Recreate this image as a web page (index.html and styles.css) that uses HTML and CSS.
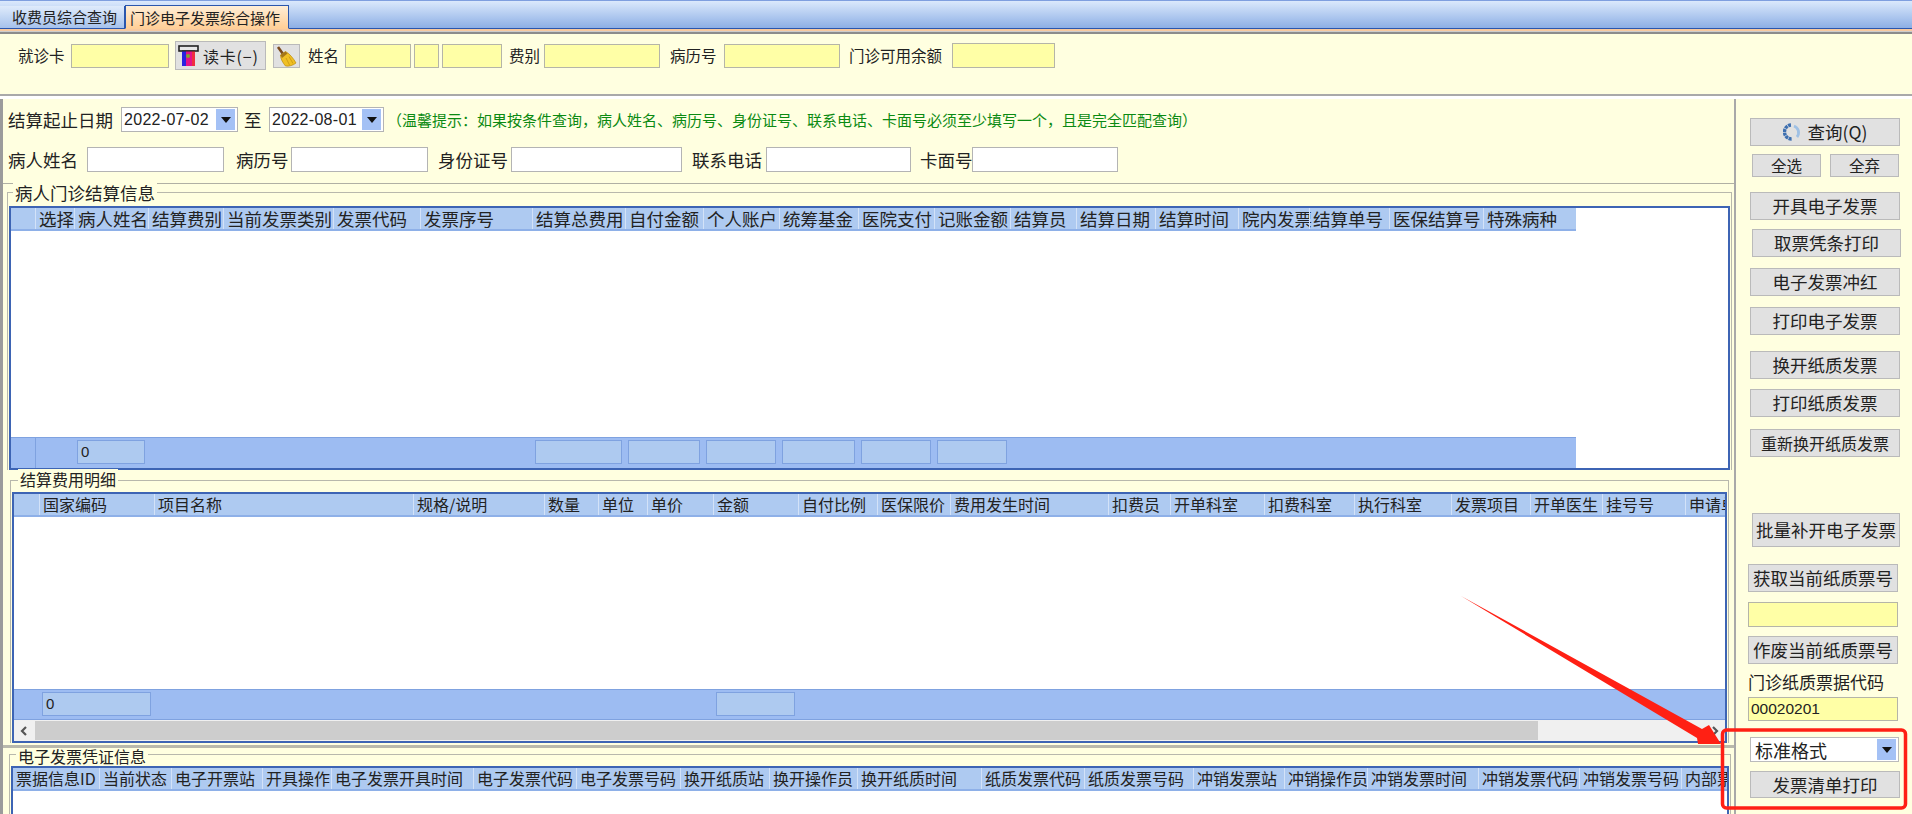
FILE: index.html
```html
<!DOCTYPE html>
<html lang="zh">
<head>
<meta charset="utf-8">
<title>门诊电子发票综合操作</title>
<link rel="stylesheet" href="styles.css">
</head>
<body>
<div class="app">
  <div class="tabbar">
    <div class="tab">收费员综合查询</div>
    <div class="tab active">门诊电子发票综合操作</div>
  </div>
  <div class="tabline"></div>

  <div class="patient-row">
    <label>就诊卡</label>
    <input class="yellow" type="text">
    <button class="btn read-card" type="button">
      <svg width="21" height="21" viewBox="0 0 21 21"><rect x="1" y="1" width="19" height="5" fill="#e8e8e8" stroke="#222" stroke-width="1.6"/><rect x="4" y="6" width="13" height="15" fill="#e2128a"/><rect x="4" y="6" width="4" height="15" fill="#2a22e0"/><rect x="14" y="6" width="3" height="15" fill="#ef2f3f"/><circle cx="10" cy="11" r="2" fill="#7fa830"/><path d="M4 6h13" stroke="#222"/></svg>
      <span>读卡(−)</span>
    </button>
    <button class="btn broom" type="button">
      <svg width="21" height="21" viewBox="0 0 21 21"><path d="M2 1l5 7" stroke="#7a4a1c" stroke-width="2.6" fill="none"/><path d="M4.500 9l5-3.500c4 2 8 7 10.500 11.500-3 2.500-7 3.500-10.500 3C7 17 4.500 13 4.500 9z" fill="#f0c024" stroke="#b98a10" stroke-width=".7"/><path d="M4.500 9l5-3.500 2 2-5.500 4.500z" fill="#a5761a"/><path d="M10 12l3.500 7M13 10.500l4 7" stroke="#c79512" stroke-width=".8"/></svg>
    </button>
    <label>姓名</label>
    <input class="yellow" type="text">
    <input class="yellow" type="text">
    <input class="yellow" type="text">
    <label>费别</label>
    <input class="yellow" type="text">
    <label>病历号</label>
    <input class="yellow" type="text">
    <label>门诊可用余额</label>
    <input class="yellow" type="text">
  </div>
  <div class="white-band"></div>

  <div class="workspace">
    <div class="main">
      <div class="filter">
        <div class="filter-dates">
          <label>结算起止日期</label>
          <div class="date"><span>2022-07-02</span><i class="drop"></i></div>
          <label>至</label>
          <div class="date"><span>2022-08-01</span><i class="drop"></i></div>
          <p class="hint">&#xFF08;温馨提示&#xFF1A;如果按条件查询&#xFF0C;病人姓名、病历号、身份证号、联系电话、卡面号必须至少填写一个&#xFF0C;且是完全匹配查询&#xFF09;</p>
        </div>
        <div class="filter-fields">
          <label>病人姓名</label>
          <input class="plain" type="text">
          <label>病历号</label>
          <input class="plain" type="text">
          <label>身份证号</label>
          <input class="plain" type="text">
          <label>联系电话</label>
          <input class="plain" type="text">
          <label>卡面号</label>
          <input class="plain" type="text">
        </div>
      </div>

      <section class="group group-settle">
        <div class="legend">病人门诊结算信息</div>
        <div class="grid grid-settle">
          <div class="row head">
            <span></span><span>选择</span><span>病人姓名</span><span>结算费别</span><span>当前发票类别</span><span>发票代码</span><span>发票序号</span><span>结算总费用</span><span>自付金额</span><span>个人账户</span><span>统筹基金</span><span>医院支付</span><span>记账金额</span><span>结算员</span><span>结算日期</span><span>结算时间</span><span>院内发票</span><span>结算单号</span><span>医保结算号</span><span>特殊病种</span>
          </div>
          <div class="grid-body"></div>
          <div class="row sum">
            <span></span><span></span><span class="box">0</span><span></span><span></span><span></span><span></span><span class="box"></span><span class="box"></span><span class="box"></span><span class="box"></span><span class="box"></span><span class="box"></span><span></span><span></span><span></span><span></span><span></span><span></span><span></span>
          </div>
        </div>
      </section>

      <section class="group group-fee">
        <div class="legend">结算费用明细</div>
        <div class="grid grid-fee">
          <div class="row head">
            <span></span><span>国家编码</span><span>项目名称</span><span>规格/说明</span><span>数量</span><span>单位</span><span>单价</span><span>金额</span><span>自付比例</span><span>医保限价</span><span>费用发生时间</span><span>扣费员</span><span>开单科室</span><span>扣费科室</span><span>执行科室</span><span>发票项目</span><span>开单医生</span><span>挂号号</span><span class="cut">申请单号</span>
          </div>
          <div class="grid-body"></div>
          <div class="row sum">
            <span></span><span class="box">0</span><span></span><span></span><span></span><span></span><span></span><span class="box"></span><span></span><span></span><span></span><span></span><span></span><span></span><span></span><span></span><span></span><span></span><span></span>
          </div>
          <div class="scrollbar">
            <svg class="chev" width="21" height="20" viewBox="0 0 21 20"><path d="M12 6l-4 4 4 4" fill="none" stroke="#555" stroke-width="2.2"/></svg>
            <div class="thumb"></div>
            <svg class="chev" width="21" height="20" viewBox="0 0 21 20"><path d="M9 6l4 4-4 4" fill="none" stroke="#555" stroke-width="2.2"/></svg>
          </div>
        </div>
      </section>

      <div class="splitter"></div>

      <section class="group group-voucher">
        <div class="legend">电子发票凭证信息</div>
        <div class="grid grid-voucher">
          <div class="row head">
            <span>票据信息ID</span><span>当前状态</span><span>电子开票站</span><span>开具操作</span><span>电子发票开具时间</span><span>电子发票代码</span><span>电子发票号码</span><span>换开纸质站</span><span>换开操作员</span><span>换开纸质时间</span><span>纸质发票代码</span><span>纸质发票号码</span><span>冲销发票站</span><span>冲销操作员</span><span>冲销发票时间</span><span>冲销发票代码</span><span>冲销发票号码</span><span class="cut">内部票据号</span>
          </div>
          <div class="grid-body"></div>
        </div>
      </section>
    </div>

    <aside class="side">
      <button class="btn act query" type="button">
        <svg width="18" height="18" viewBox="0 0 18 18"><path d="M8 2a7 7 0 1 0 1 14" fill="none" stroke="#3d6fb0" stroke-width="3.400" stroke-dasharray="3 .7"/><path d="M11 3a7 7 0 0 1 3 11" fill="none" stroke="#9fc0e4" stroke-width="2.800"/></svg>
        <span>查询(Q)</span>
      </button>
      <div class="pair">
        <button class="btn small" type="button">全选</button>
        <button class="btn small" type="button">全弃</button>
      </div>
      <button class="btn act issue" type="button">开具电子发票</button>
      <button class="btn act receipt" type="button">取票凭条打印</button>
      <button class="btn act gap11" type="button">电子发票冲红</button>
      <button class="btn act gap11" type="button">打印电子发票</button>
      <button class="btn act swap" type="button">换开纸质发票</button>
      <button class="btn act print-paper" type="button">打印纸质发票</button>
      <button class="btn act reswap" type="button">重新换开纸质发票</button>
      <button class="btn act batch" type="button">批量补开电子发票</button>
      <button class="btn act fetch" type="button">获取当前纸质票号</button>
      <input class="yellow side-no" type="text">
      <button class="btn act void" type="button">作废当前纸质票号</button>
      <div class="side-label">门诊纸质票据代码</div>
      <input class="yellow side-code" type="text" value="00020201">
      <div class="format"><span>标准格式</span><i class="drop"></i></div>
      <button class="btn act list-print" type="button">发票清单打印</button>
    </aside>
  </div>

  <svg class="annotation" width="1912" height="814" viewBox="0 0 1912 814">
    <polygon points="1461,596 1702,729 1709,725 1721,744 1698,744 1697,738" fill="#ff2014"/>
    <rect x="1722.5" y="730" width="183" height="78" rx="4" fill="none" stroke="#ff2014" stroke-width="3.500"/>
  </svg>
</div>
</body>
</html>
```

FILE: styles.css
```css
* { box-sizing: border-box; }

html, body { margin: 0; padding: 0; }

body {
  font-family: "Noto Sans CJK SC", "Liberation Sans", sans-serif;
  font-size: 16px;
  color: #222;
  background: #ffffe0;
}

.app {
  position: relative;
  width: 1912px;
  height: 814px;
  overflow: hidden;
  display: flex;
  flex-direction: column;
}

input, button { font: inherit; color: inherit; margin: 0; }

label { white-space: nowrap; flex: none; }

/* tabs */
.tabbar {
  height: 29px;
  display: flex;
  align-items: flex-end;
  border-top: 1px solid #7f9fdf;
  border-bottom: 1px solid #2a56ad;
  background: linear-gradient(#dbe9fc, #8dafe5);
  font-size: 15px;
}
.tab {
  height: 22px;
  line-height: 21px;
  width: 125px;
  padding-left: 12px;
  border-right: 1px solid #2a56ad;
  background: linear-gradient(#dfebfb, #a6c2ec);
}
.active {
  height: 24px;
  line-height: 23px;
  width: 164px;
  padding-left: 4px;
  margin-bottom: -1px;
  background: linear-gradient(#ffeed6, #ffcf98);
  border: 1px solid #2a56ad;
  border-bottom-color: #ffcf98;
}
.tabline {
  height: 5px;
  flex: none;
  border-top: 2px solid #f7c9a0;
  border-bottom: 2px solid #8c8c8c;
  background: #ccc;
}

/* inputs */
.yellow, .plain {
  display: block;
  padding: 0 2px;
  border: 1px solid #b5b5a8;
  outline: 0;
  background: #ffffa6;
  border-radius: 0;
}
.plain { background: #fff; height: 25px; border-color: #b4b4b4; }

.btn {
  display: block;
  padding: 0;
  border: 1px solid #bababa;
  background: #e1e1e1;
  border-radius: 0;
  white-space: nowrap;
}

/* patient row */
.patient-row {
  flex: none;
  height: 62px;
  padding: 7px 0 0 18px;
  display: flex;
  align-items: flex-start;
  background: #ffffe0;
  border-bottom: 2px solid #a9a9a9;
  font-size: 15.5px;
}
.patient-row label { height: 29px; line-height: 29px; }
.patient-row input { height: 24px; margin-top: 3px; }
.patient-row > :nth-child(1) { width: 47px; }
.patient-row > :nth-child(2) { width: 98px; margin-left: 6px; }
.patient-row > :nth-child(3) { width: 91px; height: 29px; margin-left: 6px; }
.patient-row > :nth-child(4) { width: 27px; height: 24px; margin: 3px 0 0 7px; }
.patient-row > :nth-child(5) { width: 31px; margin-left: 8px; }
.patient-row > :nth-child(6) { width: 66px; margin-left: 6px; }
.patient-row > :nth-child(7) { width: 25px; margin-left: 3px; }
.patient-row > :nth-child(8) { width: 60px; margin-left: 3px; }
.patient-row > :nth-child(9) { width: 31px; margin-left: 7px; }
.patient-row > :nth-child(10) { width: 116px; margin-left: 4px; }
.patient-row > :nth-child(11) { width: 47px; margin-left: 10px; }
.patient-row > :nth-child(12) { width: 116px; margin-left: 7px; }
.patient-row > :nth-child(13) { width: 96px; margin-left: 9px; }
.patient-row > :nth-child(14) { width: 103px; margin: 2px 0 0 7px; height: 25px; }

.read-card { display: flex; align-items: center; gap: 4px; padding-left: 2px; font-size: 16px; letter-spacing: .8px; }
.broom { display: flex; align-items: center; justify-content: center; }

.white-band { height: 3px; flex: none; background: #fff; }

/* workspace */
.workspace { flex: 1; min-height: 0; display: flex; }

.main {
  width: 1734px;
  flex: none;
  border-left: 3px solid #9b9b9b;
  background: #ffffe0;
}

/* filter */
.filter {
  height: 85px;
  padding: 8px 0 0 5px;
  border-bottom: 1px solid #b0b0a4;
  font-size: 17.5px;
}
.filter-dates, .filter-fields { display: flex; align-items: center; height: 25px; }
.filter-fields { margin-top: 15px; }

.date {
  display: flex;
  align-items: center;
  justify-content: space-between;
  height: 25px;
  padding: 0 2px 0 2px;
  border: 1px solid #b4b4b4;
  background: #fff;
  font: 16px "Liberation Sans", sans-serif;
  letter-spacing: .3px;
}
.filter-dates > :nth-child(1) { width: 105px; }
.filter-dates > :nth-child(2) { width: 117px; margin-left: 8px; }
.filter-dates > :nth-child(3) { width: 16px; margin-left: 6px; }
.filter-dates > :nth-child(4) { width: 115px; margin-left: 9px; }
.hint {
  margin: 0 0 0 3px;
  font-size: 15px;
  line-height: 20px;
  color: #0b8a12;
  white-space: nowrap;
}

.drop {
  flex: none;
  display: flex;
  align-items: center;
  justify-content: center;
  width: 19px;
  height: 21px;
  background: #a4c1f5;
}
.drop::after {
  content: "";
  border: 5px solid transparent;
  border-top: 6px solid #111;
  border-bottom: 0;
}

.filter-fields > :nth-child(1) { width: 70px; }
.filter-fields > :nth-child(2) { width: 137px; margin-left: 9px; }
.filter-fields > :nth-child(3) { width: 52px; margin-left: 12px; }
.filter-fields > :nth-child(4) { width: 137px; margin-left: 3px; }
.filter-fields > :nth-child(5) { width: 68px; margin-left: 10px; }
.filter-fields > :nth-child(6) { width: 171px; margin-left: 5px; }
.filter-fields > :nth-child(7) { width: 69px; margin-left: 10px; }
.filter-fields > :nth-child(8) { width: 145px; margin-left: 5px; }
.filter-fields > :nth-child(9) { width: 50px; margin-left: 9px; }
.filter-fields > :nth-child(10) { width: 146px; margin-left: 2px; }

/* group boxes */
.group {
  border: 1px solid #b8b8ac;
  border-bottom: 0;
}
.legend {
  width: fit-content;
  padding: 0 2px;
  background: #ffffe0;
  white-space: nowrap;
}
.group-settle { margin: 8px 2px 0 4px; font-size: 17.5px; }
.group-settle .legend { margin: -10px 0 3px 5px; height: 20px; line-height: 20px; }
.group-fee { margin: 10px 5px 0 7px; }
.group-fee .legend { margin: -12px 0 3px 7px; height: 20px; line-height: 20px; }
.group-voucher { margin: 6px 3px 0 6px; }
.group-voucher .legend { margin: -6px 0 3px 6px; height: 14px; line-height: 14px; }

.splitter {
  height: 3px;
  margin-top: 2px;
  background: #b9b9ac;
}

/* data grids */
.grid {
  margin: 0 1px;
  display: flex;
  flex-direction: column;
  border: 2px solid #3d64b4;
  background: #fff;
}
.grid-settle { height: 264px; }
.grid-fee { height: 251px; }
.grid-voucher { height: 120px; }
.grid-body { flex: 1; min-height: 0; background: #fff; }

.row {
  display: grid;
  flex: none;
  width: fit-content;
}
.grid-settle .row {
  grid-template-columns: 24px 39px 74px 75px 110px 87px 112px 93px 78px 76px 79px 76px 76px 66px 79px 83px 71px 80px 94px 93px;
}
.grid-fee .row {
  grid-template-columns: 25px 115px 259px 131px 54px 49px 66px 85px 79px 73px 158px 62px 94px 90px 97px 79px 72px 83px 40px;
}
.grid-voucher .row {
  grid-template-columns: 86px 72px 91px 69px 142px 103px 104px 89px 88px 124px 103px 109px 91px 83px 111px 101px 102px 46px;
}

.head {
  height: 23px;
  background: #aecaf1;
  border-bottom: 2px solid #8eb0e8;
}
.head span {
  height: 21px;
  line-height: 21px;
  padding-left: 3px;
  border-left: 1px solid #d3e2f8;
  white-space: nowrap;
}
.head span:first-child { border-left: 0; }
.head .cut { overflow-x: clip; }

.sum {
  background: #9dbcf2;
  border-top: 1px solid #7fa2e0;
  height: 30px;
}
.sum span { min-width: 0; }
.sum span:nth-child(2) { border-left: 1px solid #7fa2e0; }
.box {
  display: block;
  margin: 2px 3px 4px;
  height: 24px;
  line-height: 22px;
  padding-left: 3px;
  background: #aecaf0;
  border: 1px solid #7fa2e0;
  font-family: "Liberation Sans", sans-serif;
  font-size: 15px;
}
.grid-settle .sum { height: 31px; }

.scrollbar {
  flex: none;
  display: flex;
  align-items: center;
  height: 22px;
  background: #f0f0f0;
  border-top: 1px solid #7fa2e0;
}
.chev { flex: none; }
.thumb {
  width: 1503px;
  height: 19px;
  background: #cdcdcd;
  margin-right: auto;
}

/* side column */
.side {
  flex: 1;
  min-width: 0;
  padding: 19px 0 0 14px;
  border-left: 2px solid #a9a9a9;
  background: #ffffe0;
  font-size: 17.5px;
}
.act { width: 150px; height: 28px; margin-top: 11px; line-height: 26px; text-align: center; }
.query { display: flex; align-items: center; justify-content: center; gap: 7px; margin-top: 0; }
.pair { display: flex; gap: 9px; margin: 8px 0 0 2px; }
.small { width: 69px; height: 23px; line-height: 21px; font-size: 15.5px; text-align: center; }
.issue { margin-top: 15px; }
.receipt { margin: 9px 0 0 2px; width: 149px; }
.swap { margin-top: 16px; }
.print-paper { margin-top: 10px; }
.reswap { margin-top: 12px; font-size: 16px; }
.batch { margin: 56px 0 0 2px; width: 148px; height: 34px; line-height: 32px; }
.fetch { margin: 17px 0 0 -2px; }
.side-no { width: 150px; height: 25px; margin: 10px 0 0 -2px; }
.void { margin: 9px 0 0 -2px; }
.side-label { height: 20px; line-height: 20px; font-size: 17px; margin: 8px 0 0 -2px; white-space: nowrap; }
.side-code { width: 150px; height: 24px; margin: 5px 0 0 -2px; font: 15.5px "Liberation Sans", sans-serif; }
.format {
  display: flex;
  align-items: center;
  justify-content: space-between;
  width: 149px;
  height: 25px;
  margin-top: 16px;
  padding: 0 2px 0 4px;
  border: 1px solid #bbb;
  background: #fff;
  font-size: 18px;
}
.list-print { height: 27px; line-height: 25px; margin-top: 9px; }

/* red callout drawn on top of the screenshot */
.annotation {
  position: absolute;
  left: 0;
  top: 0;
  pointer-events: none;
}
```
